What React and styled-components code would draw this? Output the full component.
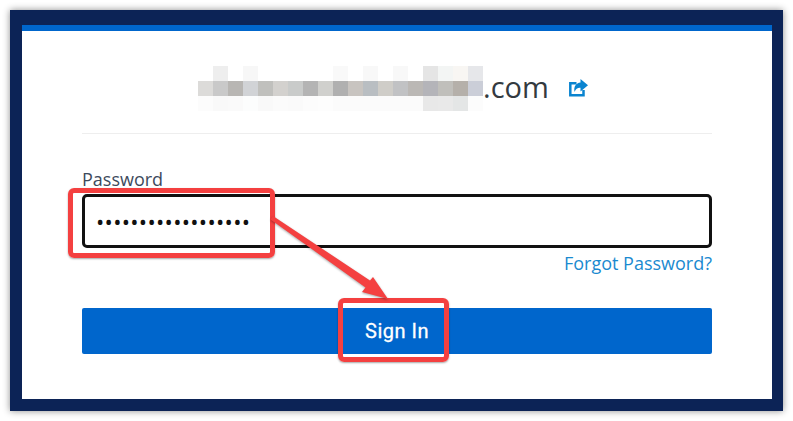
import React from 'react'
import styled, { createGlobalStyle } from 'styled-components';

const GlobalStyle = createGlobalStyle`
  html, body {
    margin: 0;
    padding: 0;
    background: #fff;
    font-family: "Open Sans", "Liberation Sans", sans-serif;
  }
`;

const Frame = styled.div`
  position: relative;
  box-sizing: border-box;
  width: 773px;
  height: 401px;
  margin: 10px;
  background: #fff;
  border-style: solid;
  border-color: #0c2356;
  border-width: 15px 11px 12px 12px;
  box-shadow: 0 0 7px rgba(0, 0, 0, 0.45);
`;

const TopBar = styled.div`
  height: 6px;
  background: #0066cc;
`;

const Content = styled.div`
  padding: 35px 60px 0;
`;

const Title = styled.div`
  display: flex;
  align-items: center;
  justify-content: center;
  padding-right: 8px;
  height: 45px;
`;

const Mosaic = styled.div`
  display: grid;
  grid-template-columns: repeat(19, 15px);
  grid-auto-rows: 15px;
`;

const Cell = styled.div`
  background: ${(p) => p.$color};
`;

const Domain = styled.span`
  margin-bottom: 3px;
  font-size: 29px;
  color: #333a40;
  line-height: 42px;
`;

const ShareIcon = styled.svg`
  display: block;
  margin-left: 20px;
  margin-bottom: 1px;
  color: #0a84d0;
`;

const Divider = styled.hr`
  height: 1px;
  margin: 22px 0 0;
  border: none;
  background: #eeeeee;
`;

const Label = styled.label`
  display: block;
  margin: 31px 0 1px;
  font-size: 18px;
  line-height: 28px;
  color: #3d4a5c;
`;

const PasswordInput = styled.input`
  display: block;
  box-sizing: border-box;
  width: 100%;
  height: 54px;
  padding: 0 11px;
  border: 3px solid #111;
  border-radius: 5px;
  background: #fff;
  outline: none;
  font-family: "Open Sans", sans-serif;
  font-size: 22px;
  letter-spacing: 0.3px;
  color: #111;
`;

const Forgot = styled.a`
  display: block;
  margin-top: 3px;
  text-align: right;
  font-size: 18px;
  line-height: 24px;
  color: #1a8ad0;
`;

const SignIn = styled.button`
  display: block;
  width: 100%;
  height: 46px;
  margin-top: 33px;
  border: none;
  border-radius: 2px;
  background: #0066cc;
  font-family: Roboto, sans-serif;
  font-size: 20px;
  font-weight: 400;
  letter-spacing: 0.5px;
  -webkit-text-stroke: 0.3px #fff;
  color: #fff;
`;

// red annotations drawn on top of the screenshot
const Callout = styled.div`
  position: absolute;
  box-sizing: border-box;
  left: ${(p) => p.$left}px;
  top: ${(p) => p.$top}px;
  width: ${(p) => p.$width}px;
  height: ${(p) => p.$height}px;
  border: 5px solid #f44040;
  border-radius: 6px;
  box-shadow: 0 1px 2px rgba(0, 0, 0, 0.35);
`;

const Arrow = styled.svg`
  position: absolute;
  left: 248px;
  top: 190px;
  filter: drop-shadow(0 1px 1px rgba(0, 0, 0, 0.35));
`;

const mosaic = [
  ['#fff', '#eeeeee', '#fff', '#f7f7f7', '#fff', '#fff', '#fff', '#fff', '#fff', '#f9f9f9', '#fff', '#f8f8f8', '#fff', '#f8f8f8', '#fff', '#e5e5e5', '#f3f5f4', '#f8f6f3', '#e6e7ea'],
  ['#dcdbd9', '#c9c9c9', '#b8b6b3', '#d1d3d6', '#c0c0bd', '#d3d1ce', '#c9cbca', '#b4b4b4', '#d0d0cd', '#b0b0b0', '#c8c4c0', '#b9bec2', '#cfcdc8', '#c1c2c4', '#bbb8b5', '#b4b4b9', '#c0bfbb', '#b5b0aa', '#cbced8'],
  ['#fcfcfc', '#f9f9f9', '#fafafa', '#fcfdfd', '#f9f9f9', '#fbfbfb', '#fafafa', '#fcfcfc', '#fdfdfd', '#fbfbfb', '#fbfbfb', '#fbfbfb', '#fbfbfb', '#fbfbfb', '#fbfbfb', '#e8e8e8', '#e9e9e9', '#e4e6e6', '#fcfcfc'],
];

const App = () => {
  return (
    <>
      <GlobalStyle />
      <Frame>
        <TopBar />
        <Content>
          <Title>
            <Mosaic>
              {mosaic.flat().map((color, i) => (
                <Cell key={i} $color={color} />
              ))}
            </Mosaic>
            <Domain>.com</Domain>
            <ShareIcon width="19" height="18" viewBox="0 0 19 18">
              <path d="M7.5 4.2 H1.3 V16.3 H14.5 V11" fill="none" stroke="currentColor" strokeWidth="2.5" />
              <path d="M11.5 0 L19 6.2 L11.5 12.5 V8.8 C8.5 8.6 6.8 9.8 5.6 13 C4.4 8 7 4 11.5 3.6 Z" fill="currentColor" />
            </ShareIcon>
          </Title>
          <Divider />
          <Label>Password</Label>
          <PasswordInput type="password" defaultValue="aaaaaaaaaaaaaaaaaa" />
          <Forgot>Forgot Password?</Forgot>
          <SignIn>Sign In</SignIn>
        </Content>
        <Callout $left={46} $top={163} $width={207} $height={70} />
        <Callout $left={316} $top={273} $width={111} $height={64} />
        <Arrow width="130" height="90" viewBox="0 0 130 90">
          <path d="M3 1 L100 65.5 L103 62 L118 84 L92 77 L95.5 72.5 L0.5 4.5 Z" fill="#f44040" />
        </Arrow>
      </Frame>
    </>
  )
}

export default App
